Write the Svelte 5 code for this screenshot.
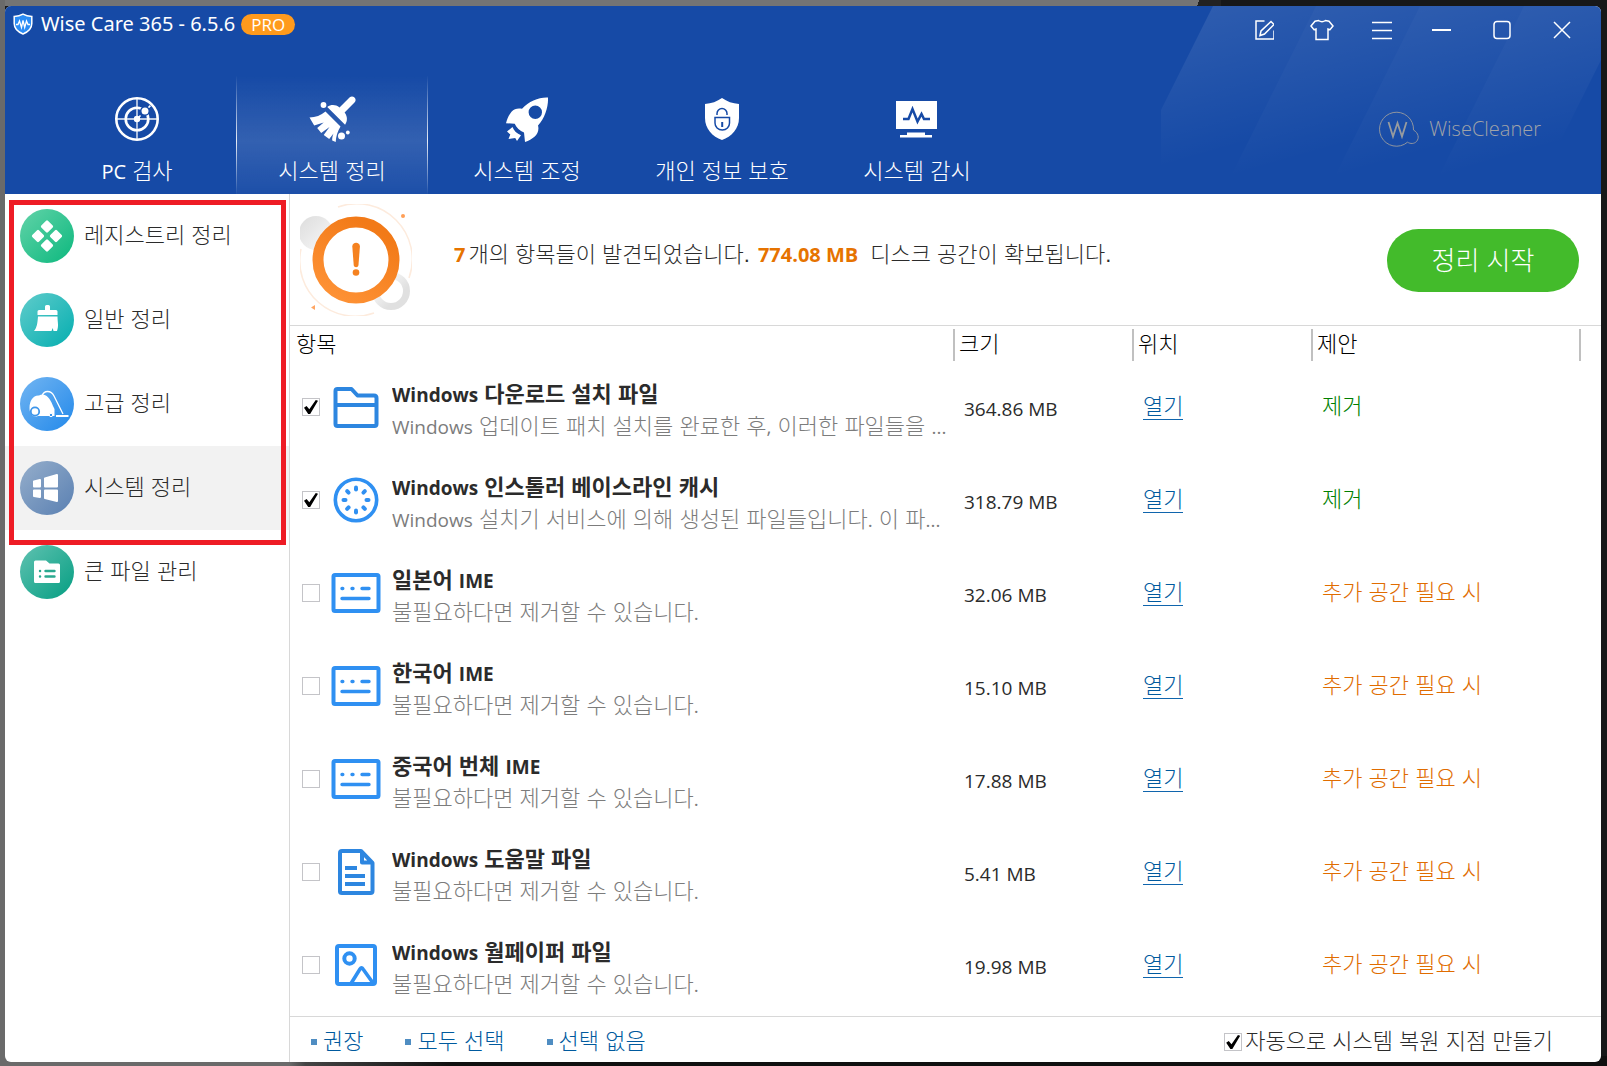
<script>
  const tabs = [
    { id: 'scan', label: 'PC 검사' },
    { id: 'clean', label: '시스템 정리' },
    { id: 'tune', label: '시스템 조정' },
    { id: 'privacy', label: '개인 정보 보호' },
    { id: 'monitor', label: '시스템 감시' }
  ];
  let activeTab = $state('clean');

  const tools = [
    { id: 'registry', label: '레지스트리 정리' },
    { id: 'common', label: '일반 정리' },
    { id: 'advanced', label: '고급 정리' },
    { id: 'system', label: '시스템 정리' }
  ];
  let activeTool = $state('system');

  const optional = '불필요하다면 제거할 수 있습니다.';
  let rows = $state([
    { icon: 'folder', name: 'Windows 다운로드 설치 파일', desc: 'Windows 업데이트 패치 설치를 완료한 후, 이러한 파일들을 ...', size: '364.86 MB', on: true },
    { icon: 'dial', name: 'Windows 인스톨러 베이스라인 캐시', desc: 'Windows 설치기 서비스에 의해 생성된 파일들입니다. 이 파...', size: '318.79 MB', on: true },
    { icon: 'ime', name: '일본어 IME', desc: optional, size: '32.06 MB', on: false },
    { icon: 'ime', name: '한국어 IME', desc: optional, size: '15.10 MB', on: false },
    { icon: 'ime', name: '중국어 번체 IME', desc: optional, size: '17.88 MB', on: false },
    { icon: 'doc', name: 'Windows 도움말 파일', desc: optional, size: '5.41 MB', on: false },
    { icon: 'image', name: 'Windows 월페이퍼 파일', desc: optional, size: '19.98 MB', on: false }
  ]);
  const advice = rows.map((r) => r.on);
  let restorePoint = $state(true);

  function recommend() {
    rows.forEach((r, i) => (r.on = advice[i]));
  }
  function setAll(value) {
    rows.forEach((r) => (r.on = value));
  }

  // Splits a label into Latin and Hangul runs; odd entries are Latin.
  const runs = (text) => text.split(/([\x21-\x7e]+(?: [\x21-\x7e]+)*)/);
</script>

{#snippet mix(text)}{#each runs(text) as part, i}{#if i % 2}<span class="latin">{part}</span>{:else}{part}{/if}{/each}{/snippet}

{#snippet tabIcon(id)}
  <svg class="tab-icon" viewBox="0 0 48 48" aria-hidden="true">
    {#if id === 'scan'}
      <g fill="none" stroke="#fff">
        <circle cx="24" cy="24" r="20.7" stroke-width="2.6" />
        <circle cx="24" cy="24" r="11.3" stroke-width="2.6" />
        <path d="M24 3v42M3 24h42" stroke-width="1.8" opacity=".7" />
        <path d="M24 24 38 10" stroke-width="1.6" stroke-dasharray="5 2" />
      </g>
      <circle cx="24" cy="24" r="3.2" fill="#fff" />
      <circle cx="32" cy="16" r="4.2" fill="#fff" stroke="#164aa6" stroke-width="1.4" />
    {:else if id === 'clean'}
      <g fill="#fff">
        <path d="M39.5 3.6c1.500-1.500 3.500-1.500 5 0s1.500 3.500 0 5L34.600 18.500c3.200 4.200 2.900 8.700.5 12.200L17.300 12.900c3.500-2.400 8-2.700 12.200.5z" transform="translate(2 -1)" />
        <path d="M17.500 16.500 32.500 31.500c-3 5-4.500 10-4.800 15.500l-3.500-1.500c-.2-2 .3-4.500 1.300-7l-4.300 5.500-5.500-4 5.800-8-8.300 6-4-5 6.500-5.500-9.500 3L1.500 22.500C7.500 22.200 13 20.500 17.500 16.500z" />
        <circle cx="15.500" cy="10" r="2.900" /><circle cx="33.500" cy="41" r="3.500" /><circle cx="39.800" cy="37.500" r="1.900" />
      </g>
    {:else if id === 'tune'}
      <path fill="#fff" fill-rule="evenodd" d="M45 2.500C45.500 11 42 23 35 30.500c1.200 4.500-.2 8.500-3.500 11.200-2.800 2.200-5.500 4-9.500 5.300l-1-9.500c-4.200-1.500-7.600-4.700-9.300-8.700L3 28.200c1.300-5 3-8.500 5.500-11.500 2.800-3 6.500-3.800 10.500-2.900C26 6 36 2 45 2.500zM32.300 10.500a6.700 6.700 0 1 0 0 13.400 6.700 6.700 0 0 0 0-13.400z" />
      <path fill="#fff" d="M9.500 32c1.200 3.500 4.500 6.800 8.500 8.300L14 46l-1.800-3L5.500 44l1.800-4.500L4 36.500z" />
    {:else if id === 'privacy'}
      <path fill="#fff" d="M24 3c5 3.500 10.500 5.500 17 6v14c0 11-7.500 18.500-17 22C14.500 41.500 7 34 7 23V9c6.500-.5 12-2.500 17-6z" />
      <g fill="none" stroke="#164aa6" stroke-width="1.500">
        <path d="M19 20v-1.500a5 5 0 0 1 10 0V20M17 22.500h14.500v5.500c0 4-3 7-7.200 7S17 32 17 28z" />
        <path d="M24.200 27v5" stroke-width="2" />
      </g>
    {:else}
      <path fill="#fff" d="M3 6h41v28H3zM14 37.500h18V40h7v2.500H7V40h7z" />
      <path fill="none" stroke="#164aa6" stroke-width="2.500" d="M10 24h5.500L19.500 14l5 12.500 4-7.500 2.500 5h6" />
    {/if}
  </svg>
{/snippet}

{#snippet toolIcon(id)}
  <svg class="tool-icon {id}" viewBox="0 0 54 54" aria-hidden="true">
    {#if id === 'registry'}
      <g fill="#fff">
        <rect x="-4.700" y="-4.700" width="9.400" height="9.400" rx="1.300" transform="translate(27 17.500) rotate(45)" />
        <rect x="-4.700" y="-4.700" width="9.400" height="9.400" rx="1.300" transform="translate(27 36.500) rotate(45)" />
        <rect x="-4.700" y="-4.700" width="9.400" height="9.400" rx="1.300" transform="translate(18 27) rotate(45)" />
        <rect x="-4.700" y="-4.700" width="9.400" height="9.400" rx="1.300" transform="translate(36 27) rotate(45)" />
      </g>
    {:else if id === 'common'}
      <path fill="#fff" d="M25 13.500q0-1.500 1.500-1.500h2q1.500 0 1.500 1.500V17h6q1.500 0 1.500 1.500V22h-20v-3.500q0-1.500 1.500-1.500h6zM18 23.500h19.500c0 6 1.500 9-.5 14.500h-3.500l-.8-3-1.200 3H14c3-3.500 3.500-8 4-14.500z" />
    {:else if id === 'advanced'}
      <path fill="#fff" d="M9.500 31C9.500 24 13 18 19 18.500c5-2.500 10 0 14 10.500l1.500 3v7H18c-5 2-8.500-2-8.500-8z" />
      <circle cx="15" cy="34.500" r="4.200" fill="#fff" stroke="#3d95ea" stroke-width="1.800" />
      <path fill="none" stroke="#fff" stroke-width="1.300" d="M22 19c2-6 9-6 12 0l9 18" />
      <path fill="none" stroke="#fff" stroke-width="2" d="M36 39h12.500" />
      <circle cx="31" cy="38" r="1.700" fill="#3d95ea" stroke="#fff" />
    {:else if id === 'system'}
      <path fill="#fff" stroke="#fff" stroke-width="2" stroke-linejoin="round" d="M14 20.500 20 19v6.500h-6zM25 17.500 37 14v11.500H25zM14 29.500h6V36l-6-1zM25 29.500h12V40l-12-3z" />
    {:else}
      <path fill="#fff" d="M14 17q0-1.500 1.500-1.500H26l3.500 3H38.500q1.500 0 1.500 1.500v16.500q0 1.500-1.500 1.500h-23Q14 38 14 36.500z" />
      <path stroke="#2aa98f" stroke-width="2.400" stroke-linecap="round" d="M20 26h.1M20 31.500h.1M25.500 26h9M25.500 31.500h9" />
    {/if}
  </svg>
{/snippet}

{#snippet rowIcon(id)}
  <svg class="row-icon" viewBox="0 0 50 50" fill="none" stroke="#2f90f2" stroke-width="4" aria-hidden="true">
    {#if id === 'folder'}
      <path stroke="#2d86e0" stroke-linejoin="round" d="M4.500 42V9q0-2 2-2h14l6 6.500H43q2.500 0 2.500 2.500v26q0 2-2 2h-37q-2 0-2-2zM4.500 23h41" />
    {:else if id === 'dial'}
      <circle cx="25" cy="25" r="20.700" stroke-width="3.600" />
      {#each [0, 45, 90, 135, 180, 225, 270, 315] as angle}
        <path stroke-linecap="round" d="M25 12.500v2" transform="rotate({angle} 25 25)" />
      {/each}
    {:else if id === 'ime'}
      <rect x="2.500" y="7" width="45" height="36" rx="1.500" />
      <path stroke-linecap="round" stroke-width="3.400" d="M11 20.500h.8M21 20.500h1M31 20.500h7M11 30.500h27" />
    {:else if id === 'doc'}
      <path stroke="#2d86e0" stroke-linejoin="round" d="M9 44.500V6q0-2 2-2h19l11.500 12V44q0 2-2 2H11q-2 0-2-1.500zM31 5v10.500h10" />
      <path stroke="#2d86e0" d="M14 21h12M14 29h20M14 37h20" />
    {:else}
      <rect x="6" y="6" width="38" height="38" rx="2" />
      <circle cx="18.500" cy="18.500" r="5.200" />
      <path d="M20 43.500 29 29q1.500-2.300 3 0l10 14" stroke-width="3.600" />
    {/if}
  </svg>
{/snippet}

<div class="desktop">
  <div class="window">
    <header>
      <svg class="rays" viewBox="0 0 440 188" aria-hidden="true">
        <defs>
          <linearGradient id="ray" x1="0" y1="0" x2="0.3" y2="1">
            <stop offset="0" stop-color="#fff" stop-opacity=".12" />
            <stop offset=".85" stop-color="#fff" stop-opacity="0" />
          </linearGradient>
        </defs>
        <path fill="url(#ray)" d="M52 0h103L61 188H-42z" />
        <path fill="url(#ray)" d="M155 0h104l-94 188H61z" />
        <path fill="url(#ray)" d="M259 0h104l-94 188H165z" />
        <path fill="url(#ray)" d="M363 0h104l-94 188H269z" />
      </svg>

      <div class="titlebar">
        <div class="brand">
          <svg class="brand-icon" viewBox="0 0 20 22" aria-hidden="true">
            <path fill="#2b8cf5" stroke="#fff" stroke-width="1.500" d="M10 1.200c2.800 1.500 5.500 2.100 8.800 2.300v7c0 5-4 8.500-8.800 10.500C5.200 19 1.200 15.500 1.200 10.500v-7C4.500 3.300 7.200 2.700 10 1.200z" />
            <path fill="none" stroke="#fff" stroke-width="1.300" d="M3 11.500h2L6.500 8l2 6.500L10 7.500l1.700 7 1.800-6.500 1.500 3.500h2" />
          </svg>
          <h1>Wise Care 365 - 6.5.6</h1>
          <span class="badge">PRO</span>
        </div>
        <div class="controls">
          <button aria-label="피드백">
            <svg viewBox="-3 0 24 24"><path d="M11.500 3H3v18h18v-8.500M18 3.500l3 3L11.500 16l-4.500 1.500 1-4.500z" /></svg>
          </button>
          <button aria-label="스킨">
            <svg viewBox="0 0 24 24"><path d="M8.500 2.500c2 1.500 5 1.500 7 0l3.500.7L23 8l-3 3.700-2-.7v10.500H6V11l-2 .7L1 8l4-4.800z" /></svg>
          </button>
          <button aria-label="메뉴">
            <svg viewBox="0 0 24 24"><path d="M2 4.500h20M2 12.500h20M2 20.500h20" /></svg>
          </button>
          <button aria-label="최소화">
            <svg viewBox="0 0 24 24"><path stroke-width="2" d="M2 12h19" /></svg>
          </button>
          <button aria-label="최대화">
            <svg viewBox="0 0 24 24"><rect x="4" y="3.500" width="16" height="17" rx="3" /></svg>
          </button>
          <button aria-label="닫기">
            <svg viewBox="0 0 24 24"><path d="m4 4 16 16M20 4 4 20" /></svg>
          </button>
        </div>
      </div>

      <div class="navrow">
        <nav class="tabs">
          {#each tabs as tab}
            <button class="tab" class:active={activeTab === tab.id} onclick={() => (activeTab = tab.id)}>
              {@render tabIcon(tab.id)}
              <span class="tab-label">{@render mix(tab.label)}</span>
            </button>
          {/each}
        </nav>
        <div class="maker">
          <svg viewBox="0 0 40 36" aria-hidden="true">
            <path fill="none" stroke="#8f959f" d="M28.500 31.200A17 17 0 1 1 34.500 19c5 3 6 8 3 11.500-2.500 2.500-6 2.500-9 .7z" />
            <path fill="none" stroke="#979b9f" stroke-width="1.800" d="m9.500 11 4.500 14.500L18.500 12 23 25.500 27.500 11" />
          </svg>
          <span>WiseCleaner</span>
        </div>
      </div>
    </header>

    <div class="body">
      <aside>
        <div class="group">
          {#each tools as tool}
            <button class="tool" class:active={activeTool === tool.id} onclick={() => (activeTool = tool.id)}>
              {@render toolIcon(tool.id)}
              <span>{tool.label}</span>
            </button>
          {/each}
          <div class="frame"></div>
        </div>
        <button class="tool" class:active={activeTool === 'bigfile'} onclick={() => (activeTool = 'bigfile')}>
          {@render toolIcon('bigfile')}
          <span>큰 파일 관리</span>
        </button>
      </aside>

      <main>
        <section class="summary">
          <svg class="alert" viewBox="0 0 112 112" aria-hidden="true">
            <defs>
              <linearGradient id="ring" x1="0" y1="1" x2=".6" y2="0">
                <stop offset="0" stop-color="#ff9438" />
                <stop offset="1" stop-color="#f27a18" />
              </linearGradient>
              <linearGradient id="ball" x1="0" y1="0" x2="1" y2="1">
                <stop offset="0" stop-color="#dcdcdc" />
                <stop offset="1" stop-color="#fafafa" />
              </linearGradient>
              <linearGradient id="hoop" x1="1" y1="1" x2="0" y2="0">
                <stop offset=".3" stop-color="#e0e0e0" />
                <stop offset="1" stop-color="#fff" />
              </linearGradient>
            </defs>
            <path fill="none" stroke="#fdebdd" stroke-width="1.500" d="M38 3a55.500 55.500 0 0 1 71 71M74 109A55.500 55.500 0 0 1 1 45" />
            <circle cx="16" cy="29" r="17" fill="url(#ball)" />
            <circle cx="91" cy="87" r="15.500" fill="none" stroke="url(#hoop)" stroke-width="7" />
            <circle cx="56" cy="56" r="38" fill="#fff" stroke="url(#ring)" stroke-width="11" />
            <path fill="#f58220" d="M52.300 42.500c0-5 7.600-5 7.600 0L58.500 61c-.3 3-4.500 3-4.800 0z" />
            <circle cx="56" cy="68.500" r="3.300" fill="#f58220" />
            <circle cx="103" cy="12" r="2" fill="#ff9f57" />
            <path fill="#ffa663" d="m11 103.500 4-2.500v5z" />
          </svg>
          <p><strong class="latin">7</strong><span>개의 항목들이 발견되었습니다.</span><strong class="latin size-total">774.08 MB</strong><span>디스크 공간이 확보됩니다.</span></p>
          <button class="start">정리 시작</button>
        </section>

        <div class="list">
          <table>
            <colgroup>
              <col />
              <col class="narrow" />
              <col class="narrow" />
              <col class="wide" />
            </colgroup>
            <thead>
              <tr>
                <th scope="col"><div>항목</div></th>
                <th scope="col"><div>크기</div></th>
                <th scope="col"><div>위치</div></th>
                <th scope="col"><div>제안</div></th>
              </tr>
            </thead>
            <tbody>
              {#each rows as row, i}
                <tr>
                  <td>
                    <div class="item">
                      <input type="checkbox" id="row-{i}" bind:checked={row.on} />
                      {@render rowIcon(row.icon)}
                      <label for="row-{i}">
                        <b>{@render mix(row.name)}</b>
                        <small>{@render mix(row.desc)}</small>
                      </label>
                    </div>
                  </td>
                  <td class="latin size">{row.size}</td>
                  <td><a href="#open-{i}">열기</a></td>
                  <td class={advice[i] ? 'remove' : 'optional'}>{advice[i] ? '제거' : '추가 공간 필요 시'}</td>
                </tr>
              {/each}
            </tbody>
          </table>
        </div>

        <footer>
          <button onclick={recommend}>권장</button>
          <button onclick={() => setAll(true)}>모두 선택</button>
          <button onclick={() => setAll(false)}>선택 없음</button>
          <label>
            <input type="checkbox" bind:checked={restorePoint} />
            자동으로 시스템 복원 지점 만들기
          </label>
        </footer>
      </main>
    </div>
  </div>
</div>

<style>
  :global(body) {
    margin: 0;
  }
  .desktop {
    box-sizing: border-box;
    min-height: 100vh;
    padding: 6px 6px 4px 5px;
    display: flex;
    font-family: 'Liberation Sans', 'Noto Sans CJK KR', sans-serif;
    font-size: 22px;
    line-height: 32px;
    font-weight: 300;
    color: #2b2b2b;
    background:
      linear-gradient(90deg, #6a6a6a, #6a6a6a) left / 5px 100% no-repeat,
      linear-gradient(115deg, #747474 0 98%, #222 98%) top left / 76% 6px no-repeat,
      linear-gradient(90deg, #6a6a6a 0 18%, #444 19%, #101010 28%) bottom left / 100% 10px no-repeat,
      #171819;
  }
  .window {
    flex: 1;
    min-width: 0;
    display: flex;
    flex-direction: column;
    background: #fff;
    border-radius: 6px;
    overflow: hidden;
  }
  button {
    font: inherit;
    color: inherit;
    border: 0;
    padding: 0;
    background: none;
    cursor: pointer;
  }
  .latin {
    font-family: 'Open Sans', sans-serif;
    font-size: 19px;
    font-weight: 400;
  }

  header {
    position: relative;
    height: 188px;
    display: flex;
    flex-direction: column;
    justify-content: space-between;
    background: #164aa6;
    color: #fff;
  }
  .rays {
    position: absolute;
    top: 0;
    right: 0;
    height: 100%;
  }
  .titlebar,
  .navrow {
    position: relative;
    display: flex;
    justify-content: space-between;
  }
  .brand {
    display: flex;
    align-items: center;
    height: 36px;
    padding-left: 8px;
  }
  .brand-icon {
    width: 20px;
    height: 22px;
    margin-right: 8px;
  }
  h1 {
    margin: 0;
    font: 400 20px/32px 'Noto Sans', 'Open Sans', sans-serif;
  }
  .badge {
    margin-left: 6px;
    padding: 0 10px;
    border-radius: 11px;
    background: #ff9a1c;
    font: 400 17px/21px 'Open Sans', sans-serif;
  }
  .controls {
    display: flex;
    gap: 36px;
    padding: 12px 27px 0 0;
  }
  .controls button,
  .controls svg {
    display: block;
    width: 24px;
    height: 24px;
    fill: none;
    stroke: #fff;
    stroke-width: 1.5;
  }
  .tabs {
    display: flex;
    gap: 3px;
    padding-left: 36px;
  }
  .tab {
    width: 192px;
    height: 118px;
    display: flex;
    flex-direction: column;
    align-items: center;
    padding-top: 19px;
    border: solid transparent;
    border-width: 0 1px;
  }
  .tab.active {
    background: linear-gradient(#ffffff00, #ffffff20 55%, #ffffff10 85%, #ffffff08);
    border-image: linear-gradient(#ffffff00, #ffffffe0 55%, #ffffff00) 1;
    border-width: 0 1px;
  }
  .tab-icon {
    width: 48px;
    height: 48px;
  }
  .tab-label {
    margin-top: 13px;
  }
  .tab-label .latin {
    font-size: 20px;
  }
  .maker {
    display: flex;
    align-items: center;
    gap: 10px;
    padding: 0 60px 12px 0;
    color: #a0a3a8;
    font: 300 20px/32px 'Open Sans', sans-serif;
  }
  .maker svg {
    width: 40px;
    height: 36px;
  }

  .body {
    flex: 1;
    display: flex;
  }
  aside {
    flex: none;
    width: 284px;
    border-right: 1px solid #d8d8d8;
  }
  .group {
    position: relative;
  }
  .frame {
    position: absolute;
    inset: 6px 3px -15px 4px;
    border: 5px solid #ee1c25;
    pointer-events: none;
  }
  .tool {
    width: 100%;
    height: 84px;
    display: flex;
    align-items: center;
    gap: 10px;
    padding-left: 15px;
  }
  .tool.active {
    background: #f2f2f2;
  }
  .tool-icon {
    width: 54px;
    height: 54px;
    border-radius: 50%;
  }
  .registry { background: linear-gradient(135deg, #62d3a8, #0cb87e); }
  .common { background: linear-gradient(135deg, #60cccb, #04aeb0); }
  .advanced { background: linear-gradient(135deg, #72b5f2, #2389ea); }
  .system { background: linear-gradient(135deg, #95aecb, #5a80b2); }
  .bigfile { background: linear-gradient(135deg, #60c2b1, #059e82); }

  main {
    flex: 1;
    min-width: 0;
    display: flex;
    flex-direction: column;
  }
  .summary {
    height: 131px;
    display: flex;
    align-items: center;
    padding: 0 22px 0 10px;
    border-bottom: 1px solid #d8d8d8;
  }
  .alert {
    width: 112px;
    height: 112px;
  }
  .summary p {
    flex: 1;
    margin: 0 0 9px 42px;
    white-space: nowrap;
  }
  .summary strong {
    color: #e67300;
    font-size: 20px;
    font-weight: 700;
    margin-right: 3px;
  }
  .summary .size-total {
    margin: 0 12px 0 8px;
  }
  .start {
    width: 192px;
    height: 63px;
    margin-top: 2px;
    border-radius: 32px;
    background: #43bb2b;
    color: #fff;
    font-size: 26px;
    font-weight: 300;
  }

  .list {
    flex: 1;
    padding-right: 20px;
  }
  table {
    width: 100%;
    table-layout: fixed;
    border-collapse: collapse;
  }
  .narrow { width: 179px; }
  .wide { width: 268px; }
  th {
    padding: 3px 0 0;
    text-align: left;
    font-weight: 300;
    color: #000;
  }
  th div {
    padding-left: 4px;
    border-right: 2px solid #c0c0c0;
  }
  th:first-child div {
    padding-left: 6px;
  }
  td {
    height: 92px;
    padding: 0 0 1px 9px;
    white-space: nowrap;
  }
  td.size {
    height: 91px;
    padding-top: 2px;
    padding-bottom: 0;
  }
  .item {
    display: flex;
    align-items: center;
    gap: 11px;
    padding-left: 3px;
  }
  .row-icon {
    flex: none;
    width: 50px;
    height: 50px;
  }
  .item label {
    min-width: 0;
    padding-top: 8px;
  }
  b,
  small {
    display: block;
    overflow: hidden;
    text-overflow: ellipsis;
    font-size: 22px;
    line-height: 31px;
  }
  b,
  b .latin {
    font-weight: 700;
  }
  small {
    color: #7c7c7c;
  }
  input[type='checkbox'] {
    appearance: none;
    flex: none;
    width: 18px;
    height: 18px;
    margin: 0;
    border: 1px solid #c4c4c8;
    background: #fff;
  }
  input[type='checkbox']:checked {
    display: grid;
    place-items: center;
  }
  input[type='checkbox']:checked::before {
    content: '';
    width: 14px;
    height: 14px;
    background: #000;
    clip-path: polygon(0 55%, 18% 42%, 38% 66%, 84% 0, 100% 6%, 44% 100%, 30% 100%);
  }
  a {
    color: #005a9e;
    text-decoration: none;
    border-bottom: 1px solid #1065ad;
    display: inline-block;
    line-height: 25px;
  }
  .remove { color: #008000; }
  .optional { color: #e06c00; }

  footer {
    height: 40px;
    display: flex;
    align-items: center;
    gap: 42px;
    padding: 5px 48px 0 21px;
    border-top: 1px solid #d8d8d8;
    color: #005a9e;
  }
  footer button {
    display: flex;
    align-items: center;
    gap: 6px;
  }
  footer button::before {
    content: '';
    width: 6px;
    height: 6px;
    background: #4f8dc2;
  }
  footer label {
    display: flex;
    align-items: center;
    gap: 3px;
    margin-left: auto;
    color: #2b2b2b;
  }
</style>
